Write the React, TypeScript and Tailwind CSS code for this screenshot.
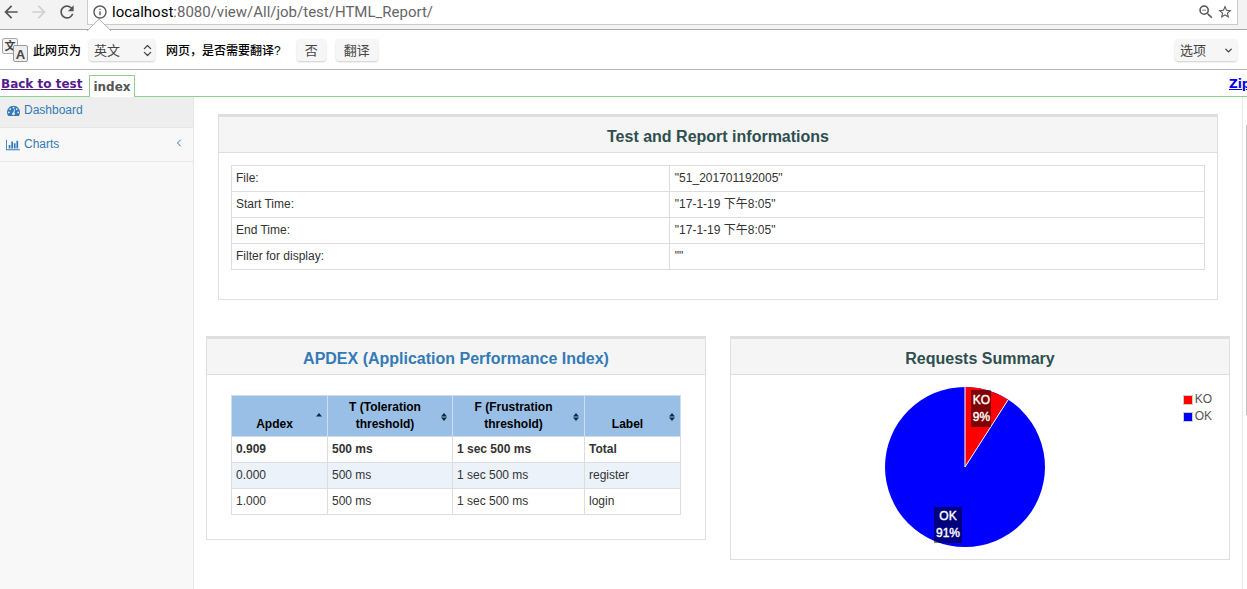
// src/App.tsx
import React from 'react';
import { ChevronDown, ChevronLeft, ChevronsUpDown } from 'lucide-react';
import { MdArrowBack, MdArrowForward, MdInfoOutline, MdRefresh, MdStarBorder, MdZoomOut } from 'react-icons/md';

interface InfoRow {
  label: string;
  value: string;
}

interface ApdexRow {
  apdex: string;
  toleration: string;
  frustration: string;
  label: string;
}

const infoRows: InfoRow[] = [
  { label: 'File:', value: '"51_201701192005"' },
  { label: 'Start Time:', value: '"17-1-19 下午8:05"' },
  { label: 'End Time:', value: '"17-1-19 下午8:05"' },
  { label: 'Filter for display:', value: '""' },
];

const apdexColumns = [
  { title: 'Apdex', width: 'w-[96px]', sorted: true },
  { title: 'T (Toleration threshold)', width: 'w-[125px]', sorted: false },
  { title: 'F (Frustration threshold)', width: 'w-[132px]', sorted: false },
  { title: 'Label', width: '', sorted: false },
];

const apdexRows: ApdexRow[] = [
  { apdex: '0.909', toleration: '500 ms', frustration: '1 sec 500 ms', label: 'Total' },
  { apdex: '0.000', toleration: '500 ms', frustration: '1 sec 500 ms', label: 'register' },
  { apdex: '1.000', toleration: '500 ms', frustration: '1 sec 500 ms', label: 'login' },
];

const barButton =
  'h-[22px] rounded-[3px] bg-[#f6f6f6] pt-px text-[13px] text-[#444] shadow-[0_1px_2px_rgba(0,0,0,0.2)]';

function DashboardIcon() {
  return (
    <svg viewBox="0 0 1792 1792" className="size-[13px]" fill="currentColor" aria-hidden="true">
      <path d="M384 1152q0-53-37.5-90.5t-90.5-37.5-90.5 37.5-37.5 90.5 37.5 90.5 90.5 37.5 90.5-37.5 37.5-90.5zm192-448q0-53-37.5-90.5t-90.5-37.5-90.5 37.5-37.5 90.5 37.5 90.5 90.5 37.5 90.5-37.5 37.5-90.5zm428 481l101-382q6-26-7.5-48.5t-38.5-29.5-48 6.5-30 39.5l-101 382q-60 5-107 43.5t-63 98.5q-20 77 20 146t117 89 146-20 89-117q16-60-6-117t-72-91zm660-33q0-53-37.5-90.5t-90.5-37.5-90.5 37.5-37.5 90.5 37.5 90.5 90.5 37.5 90.5-37.5 37.5-90.5zm-640-640q0-53-37.5-90.5t-90.5-37.5-90.5 37.5-37.5 90.5 37.5 90.5 90.5 37.5 90.5-37.5 37.5-90.5zm448 192q0-53-37.5-90.5t-90.5-37.5-90.5 37.5-37.5 90.5 37.5 90.5 90.5 37.5 90.5-37.5 37.5-90.5zm320 448q0 261-141 483-19 29-54 29h-1402q-35 0-54-29-141-221-141-483 0-182 71-348t191-286 286-191 348-71 348 71 286 191 191 286 71 348z" />
    </svg>
  );
}

function BarChartIcon() {
  return (
    <svg viewBox="0 0 2048 1792" className="h-[12px] w-[14px]" fill="currentColor" aria-hidden="true">
      <path d="M640 896v512h-256v-512h256zm384-512v1024h-256v-1024h256zm1024 1152v128h-2048v-1536h128v1408h1920zm-640-896v768h-256v-768h256zm384-384v1152h-256v-1152h256z" />
    </svg>
  );
}

function TranslateIcon() {
  return (
    <svg viewBox="0 0 26 26" className="size-[26px]" aria-hidden="true">
      <rect x="0.5" y="1.5" width="15" height="15" rx="1.5" fill="#f4f4f4" stroke="#aaa" />
      <text x="8" y="12.5" fontSize="11" fontWeight="700" textAnchor="middle" fill="#444">文</text>
      <rect x="11.5" y="8.5" width="14" height="16" rx="1.5" fill="#eee" stroke="#999" />
      <text x="18.5" y="21.5" fontSize="13" fontWeight="700" textAnchor="middle" fill="#444">A</text>
    </svg>
  );
}

function SortIcon({ sorted }: { sorted: boolean }) {
  return (
    <svg viewBox="0 0 6 8" className="h-[8px] w-[6px]" fill="#12283c" aria-hidden="true">
      <path d="M0 3.5 3 0 6 3.5z" />
      {!sorted && <path d="M0 4.5 3 8 6 4.5z" />}
    </svg>
  );
}

function PieChart() {
  return (
    <svg
      viewBox="0 0 160 160"
      className="size-[160px]"
      role="img"
      aria-label="KO 9%, OK 91%"
      fontSize="12"
      textAnchor="middle"
    >
      <circle cx="80" cy="80" r="80" fill="#0000ff" />
      <path d="M80 80V0A80 80 0 0 1 123.2 12.7Z" fill="#ff0000" />
      <path d="M80 0V80L123.2 12.7" fill="none" stroke="#fff" strokeWidth="1" />
      <rect x="86" y="3" width="20" height="37" fill="#000" fillOpacity="0.5" />
      <rect x="49" y="120" width="28" height="36" fill="#000" fillOpacity="0.5" />
      <g fill="#fff" stroke="#fff" strokeWidth="0.4">
        <text x="96.5" y="17">KO</text>
        <text x="96.5" y="34">9%</text>
        <text x="63" y="133">OK</text>
        <text x="63" y="150">91%</text>
      </g>
    </svg>
  );
}

function Panel({ title, children }: { title: React.ReactNode; children: React.ReactNode }) {
  return (
    <section className="border border-t-[3px] border-[#dfdfdf]">
      <h2 className="border-b border-[#ddd] bg-[#f5f5f5] pt-[10px] pb-[5px] text-center text-[16px] leading-5 font-bold text-[#2f4f4f]">
        {title}
      </h2>
      {children}
    </section>
  );
}

export default function App() {
  return (
    <div className="flex min-h-screen flex-col overflow-hidden bg-white font-['Liberation_Sans','Noto_Sans_CJK_SC',sans-serif] text-[12px] leading-[17px] text-[#333]">
      {/* Browser toolbar */}
      <header className="relative flex h-[30px] items-start border-b border-[#a9a9a9] bg-[#f3f3f3]">
        <div className="flex h-6 w-[87px] items-center gap-2 pl-[1px] text-[#555]">
          <button aria-label="Back"><MdArrowBack size={20} /></button>
          <button aria-label="Forward" className="text-[#d0d0d0]"><MdArrowForward size={20} /></button>
          <button aria-label="Reload"><MdRefresh size={20} /></button>
        </div>
        <div className="mr-[9px] flex h-[25px] flex-1 items-center border-r border-b border-l border-[#ccc] bg-white px-1 text-[#555]">
          <MdInfoOutline size={16} />
          <div className="flex-1 pl-1 font-['Roboto',sans-serif] text-[15px] leading-6 text-[#666]">
            <span className="text-black">localhost</span>:8080/view/All/job/test/HTML_Report/
          </div>
          <div className="flex items-center gap-[2px]">
            <button aria-label="Zoom out"><MdZoomOut size={18} /></button>
            <button aria-label="Bookmark"><MdStarBorder size={16} /></button>
          </div>
        </div>
        {/* Notch of the info bar, pointing at the page info icon */}
        <svg viewBox="0 0 24 13" className="absolute top-[18px] left-[87px] h-[13px] w-6" aria-hidden="true">
          <path d="M0 13 12 1 24 13" fill="#fff" stroke="#b4b4b4" />
        </svg>
      </header>

      {/* Translate bar */}
      <div className="flex h-10 items-center border-b border-[#b5b5b5] pr-[10px] pl-[2px] font-medium text-black">
        <TranslateIcon />
        <label htmlFor="language" className="pt-1 pl-[5px]">此网页为</label>
        <div className="relative ml-2">
          <select id="language" className={`${barButton} w-[66px] appearance-none pl-[5px] font-normal`}>
            <option>英文</option>
          </select>
          <ChevronsUpDown size={15} className="pointer-events-none absolute top-1 right-0 text-[#444]" />
        </div>
        <span className="pt-1 pl-[11px]">网页，是否需要翻译?</span>
        <button className={`${barButton} ml-4 w-[29px] font-normal`}>否</button>
        <button className={`${barButton} ml-[10px] w-[42px] font-normal`}>翻译</button>
        <div className="relative ml-auto">
          <select aria-label="选项" className={`${barButton} w-[62px] appearance-none pl-[5px] font-normal`}>
            <option>选项</option>
          </select>
          <ChevronDown size={11} className="pointer-events-none absolute top-[6px] right-[3px] text-[#444]" strokeWidth={3} />
        </div>
      </div>

      {/* Report tabs */}
      <nav className="flex h-[27px] items-stretch border-b border-[#8fd08f] pl-[1px] font-['DejaVu_Sans',sans-serif] font-bold">
        <a href="#back" className="pt-[6px] text-[#551a8b] underline">Back to test</a>
        <a href="#index" className="relative top-px mt-1 ml-[7px] border border-b-0 border-[#8fd08f] bg-white px-[3px] pt-[3px] text-[#555]">
          index
        </a>
        <a href="#zip" className="ml-auto w-[18px] overflow-hidden pt-[6px] text-[#0000ee] underline">Zip</a>
      </nav>

      <div className="flex flex-1">
        {/* Sidebar */}
        <aside className="w-[194px] shrink-0 border-r border-[#e7e7e7] bg-[#f8f8f8] text-[#337ab7]">
          <a href="#dashboard" className="flex h-[31px] items-center gap-1 border-b border-[#e7e7e7] bg-[#eee] pb-1 pl-[7px]">
            <DashboardIcon />
            Dashboard
          </a>
          <a href="#charts" className="flex h-[34px] items-center gap-1 border-b border-[#e7e7e7] pl-[6px]">
            <BarChartIcon />
            Charts
            <ChevronLeft size={12} className="mr-2 mb-1 ml-auto" />
          </a>
        </aside>

        {/* Report */}
        <main className="min-w-0 flex-1 px-3 pt-[17px]">
          <div className="px-3">
            <Panel title="Test and Report informations">
              <div className="px-3 pt-3 pb-[29px]">
                <table className="w-full table-fixed border-collapse">
                  <tbody>
                    {infoRows.map(({ label, value }) => (
                      <tr key={label}>
                        <th scope="row" className="w-[45%] border border-[#ddd] p-1 text-left font-normal">{label}</th>
                        <td className="border border-[#ddd] p-1 pl-[5px]">{value}</td>
                      </tr>
                    ))}
                  </tbody>
                </table>
              </div>
            </Panel>
          </div>

          <div className="mt-9 grid grid-cols-2 items-start gap-6">
            <Panel title={<a href="#apdex" className="text-[#337ab7]">APDEX (Application Performance Index)</a>}>
              <div className="px-6 pt-5 pb-6">
                <table className="w-full table-fixed border-collapse">
                  <thead>
                    <tr className="bg-[#99bfe6] text-black">
                      {apdexColumns.map(({ title, width, sorted }) => (
                        <th key={title} className={`${width} relative border border-[#cddfee] py-[3px] pr-[14px] pl-1 align-bottom`}>
                          {title}
                          <span className="absolute top-[17px] right-[5px]"><SortIcon sorted={sorted} /></span>
                        </th>
                      ))}
                    </tr>
                  </thead>
                  <tbody>
                    {apdexRows.map(row => (
                      <tr key={row.label} className="first:font-bold even:bg-[#ebf2fa]">
                        <td className="border border-[#ddd] p-1">{row.apdex}</td>
                        <td className="border border-[#ddd] p-1">{row.toleration}</td>
                        <td className="border border-[#ddd] p-1">{row.frustration}</td>
                        <td className="border border-[#ddd] p-1">{row.label}</td>
                      </tr>
                    ))}
                  </tbody>
                </table>
              </div>
            </Panel>

            <Panel title="Requests Summary">
              <div className="flex pt-3 pr-[17px] pb-3 pl-4">
                <div className="flex flex-1 justify-center">
                  <PieChart />
                </div>
                <ul className="pt-1 text-[#545454]">
                  <li className="flex items-center gap-[2px]">
                    <span className="size-[10px] border border-[#ccc] bg-[#ff0000]" />
                    KO
                  </li>
                  <li className="flex items-center gap-[2px]">
                    <span className="size-[10px] border border-[#ccc] bg-[#0000ff]" />
                    OK
                  </li>
                </ul>
              </div>
            </Panel>
          </div>
        </main>

        {/* Scrollbar track */}
        <div className="w-[5px] shrink-0 border-l border-[#e8e8e8] pt-7">
          <div className="ml-auto h-[290px] w-px bg-[#c1c1c1]" />
        </div>
      </div>
    </div>
  );
}
